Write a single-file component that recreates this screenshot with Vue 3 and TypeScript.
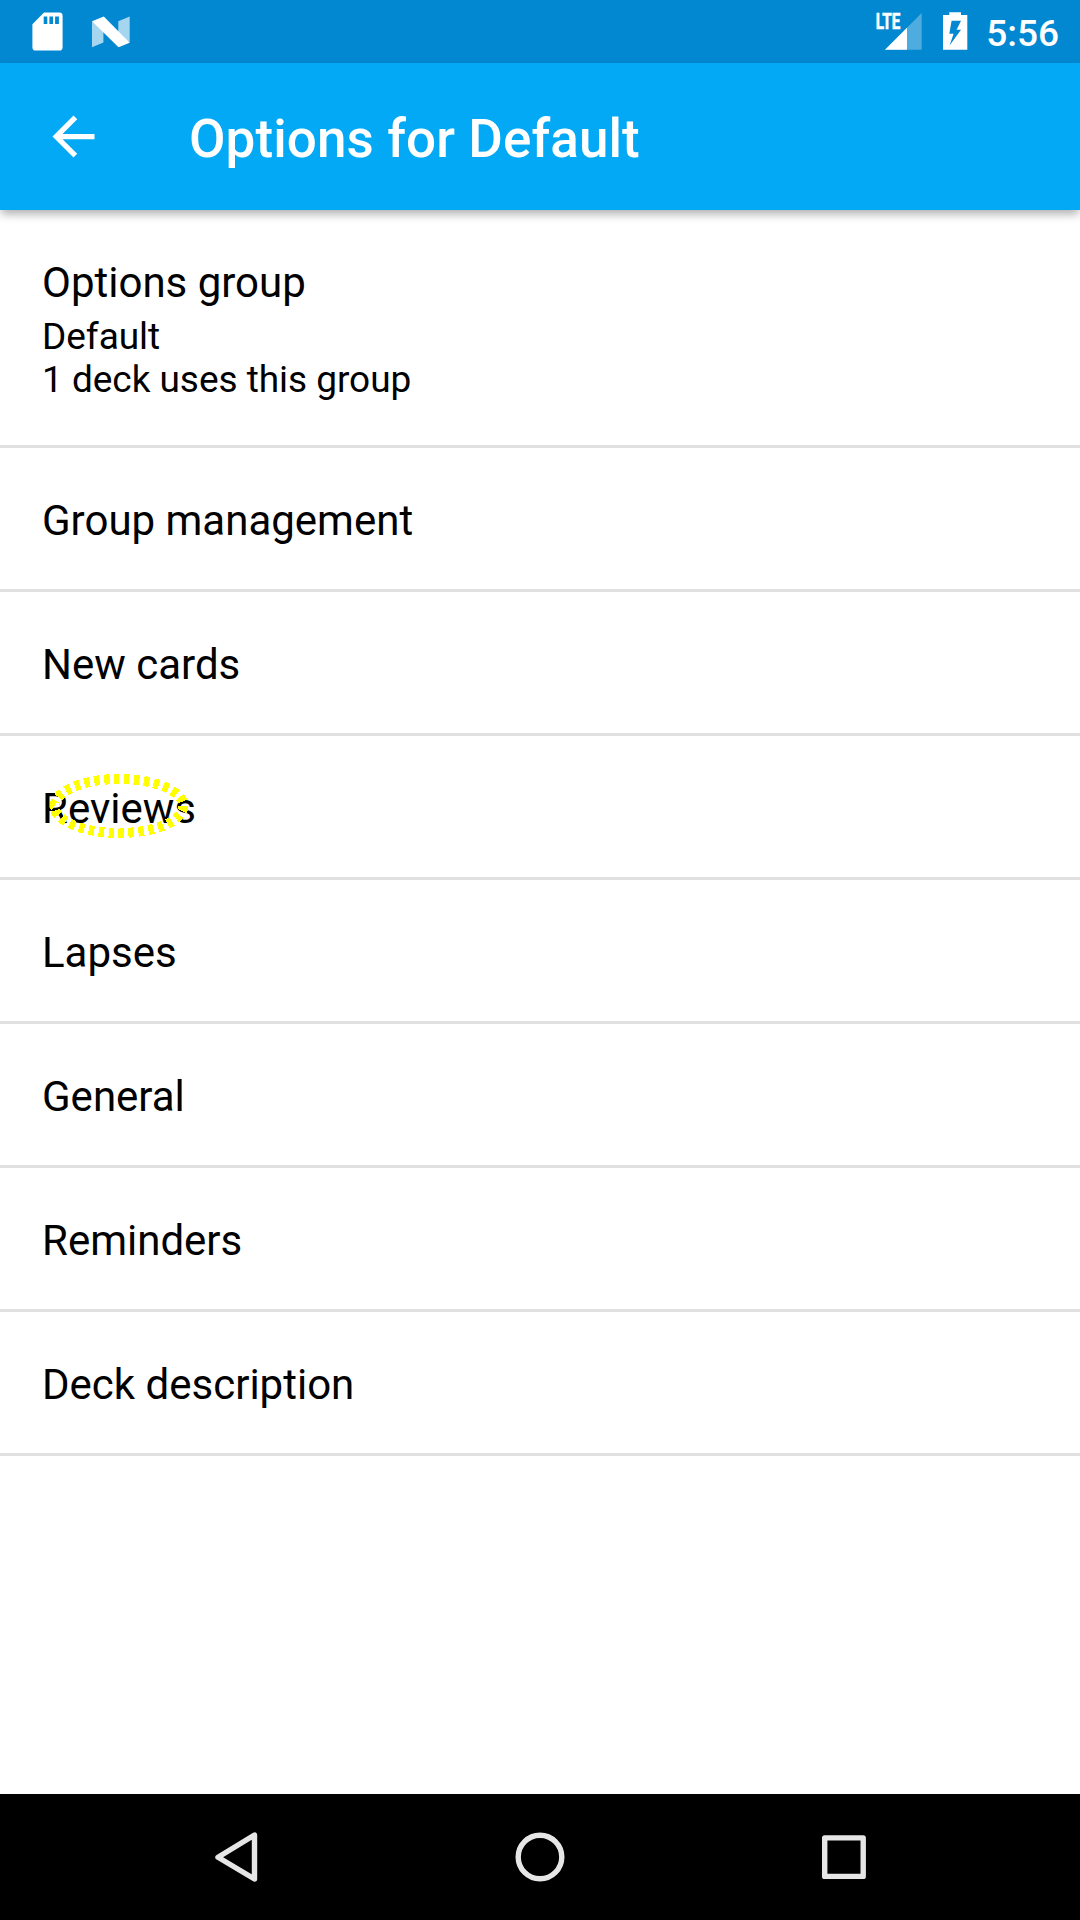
<script setup lang="ts">
import { ref } from 'vue'

interface Option {
  title: string
  summary?: string[]
  highlighted?: boolean
}

const options = ref<Option[]>([
  { title: 'Options group', summary: ['Default', '1 deck uses this group'] },
  { title: 'Group management' },
  { title: 'New cards' },
  { title: 'Reviews', highlighted: true },
  { title: 'Lapses' },
  { title: 'General' },
  { title: 'Reminders' },
  { title: 'Deck description' },
])
</script>

<template>
  <div class="screen">
    <header class="status">
      <div class="group">
        <svg class="sd" width="32" height="40" viewBox="0 0 32 40">
          <path
            fill="#fff"
            fill-rule="evenodd"
            d="M12 .4h15.2a3.4 3.4 0 0 1 3.4 3.4v31.4a3.4 3.4 0 0 1-3.4 3.4H3.8a3.4 3.4 0 0 1-3.4-3.4V12.200zM11.700 4.400v7.600h3.600v-7.600zM17.400 4.400v7.600h3.600v-7.600zM23.100 4.400v7.600h3.800v-7.600z"
          />
        </svg>
        <svg class="nougat" width="38" height="32" viewBox="0 0 38 32">
          <path fill="#fff" fill-opacity=".65" d="M0 5.200V31.300L11.400 26.600V12zM26.300 5.200L37.700.5V26.600L26.300 20z" />
          <path fill="#fff" d="M0 5.200L11.800.5L37.700 26.800L26.500 31.300z" />
        </svg>
      </div>
      <div class="group">
        <svg class="signal" width="51" height="52" viewBox="-4 -12 51 52">
          <path fill="#fff" fill-opacity=".3" d="M45.700 1V37.700H9z" />
          <path fill="#fff" d="M31 15.700V37.700H9z" />
          <text class="lte" x="-0.300" y="17.200" textLength="24.600" lengthAdjust="spacingAndGlyphs">LTE</text>
        </svg>
        <svg class="battery" width="25" height="38" viewBox="0 0 25 38">
          <path
            fill="#fff"
            fill-rule="evenodd"
            d="M6.300.3H18V3H24.300V37.700H0V3H6.300zM8.600 8.800L6.300 21.700H10.600L6.600 33.600L18 17.800H13.600L18 8.800z"
          />
        </svg>
        <span class="time">5:56</span>
      </div>
    </header>

    <div class="appbar">
      <svg class="back" width="63" height="63" viewBox="0 0 24 24">
        <path fill="#fff" d="M20 11H7.830l5.590-5.590L12 4l-8 8 8 8 1.410-1.410L7.830 13H20v-2z" />
      </svg>
      <h1>Options for Default</h1>
    </div>

    <ul class="list">
      <li v-for="option in options" :key="option.title" class="row" :class="{ tall: option.summary }">
        <span class="title">{{ option.title }}</span>
        <span v-for="line in option.summary" :key="line" class="summary">{{ line }}</span>
        <svg v-if="option.highlighted" class="ring" width="140" height="66" viewBox="0 0 140 66">
          <path
            d="M70 6A64.500 27 0 0 1 70 60A64.500 27 0 0 1 70 6"
            pathLength="300"
            fill="none"
            stroke="#ff0"
            stroke-width="10"
            stroke-dasharray="5.500 4.500"
            stroke-dashoffset="5"
            shape-rendering="crispEdges"
          />
        </svg>
      </li>
    </ul>

    <nav class="nav">
      <svg width="304" height="126" viewBox="0 0 304 126">
        <path d="M170.500 41V85L134 63.200z" />
      </svg>
      <svg width="304" height="126" viewBox="0 0 304 126">
        <circle cx="152" cy="63" r="21.800" />
      </svg>
      <svg width="304" height="126" viewBox="0 0 304 126">
        <rect x="132.700" y="43.900" width="38.500" height="38.500" />
      </svg>
    </nav>
  </div>
</template>

<style>
body {
  margin: 0;
  background: #fff;
}
</style>

<style scoped>
.screen {
  display: flex;
  flex-direction: column;
  width: 1080px;
  height: 1920px;
  overflow: hidden;
  background: #fff;
  color: #000;
  font-family: Roboto, "Liberation Sans", sans-serif;
}

svg {
  display: block;
  flex: none;
}

.status {
  display: flex;
  justify-content: space-between;
  box-sizing: border-box;
  height: 63px;
  padding: 0 21px 0 32px;
  background: #0288d1;
  color: #fff;
}

.group {
  display: flex;
  align-items: flex-start;
}

.sd {
  margin-top: 12px;
}

.nougat {
  margin: 16px 0 0 27.6px;
}

.signal {
  margin: 0 20px 0 0;
}

.lte {
  fill: #fff;
  stroke: #fff;
  stroke-width: 0.6px;
  font-size: 22px;
  font-weight: 700;
}

.battery {
  margin: 12px 18.4px 0 0;
}

.time {
  margin-top: 12px;
  font-size: 37px;
  font-weight: 500;
  line-height: 44px;
}

.appbar {
  display: flex;
  align-items: center;
  position: relative;
  box-sizing: border-box;
  height: 147px;
  padding-left: 42px;
  background: #03a9f4;
  box-shadow: 0 5px 9px -1px rgba(0, 0, 0, 0.32);
  color: #fff;
}

h1 {
  margin: 5px 0 0 84px;
  font-size: 53px;
  font-weight: 500;
  line-height: 62px;
  letter-spacing: 0.09px;
}

.list {
  flex: 1;
  margin: 0;
  padding: 0;
  list-style: none;
}

.row {
  display: flex;
  flex-direction: column;
  position: relative;
  box-sizing: border-box;
  height: 144px;
  padding: 48px 42px 0;
  border-bottom: 3px solid #e0e0e0;
}

.tall {
  height: 238px;
}

.title {
  font-size: 42px;
  line-height: 49px;
}

.summary {
  font-size: 37px;
  line-height: 43px;
  letter-spacing: -0.04px;
}

.title + .summary {
  margin-top: 8px;
}

.ring {
  position: absolute;
  left: 49px;
  top: 37px;
}

.nav {
  display: flex;
  justify-content: center;
  height: 126px;
  background: #000;
}

.nav svg {
  fill: none;
  stroke: #e6e6e6;
  stroke-width: 5.4px;
  stroke-linejoin: round;
}
</style>
